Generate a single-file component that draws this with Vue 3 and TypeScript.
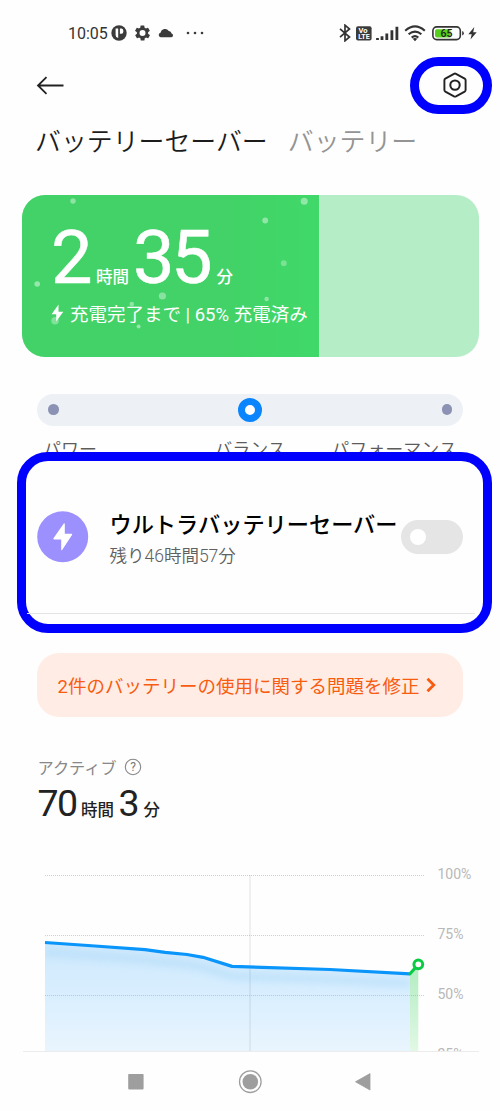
<script setup lang="ts">
interface Dot {
  x: number
  y: number
  r: number
  o: number
}

const bubbles: Dot[] = [
  { x: 51, y: 6, r: 2.7, o: 0.4 },
  { x: 15.2, y: 89, r: 2.8, o: 0.45 },
  { x: 140.4, y: 101, r: 3.6, o: 0.38 },
  { x: 109.8, y: 109, r: 2.3, o: 0.4 },
  { x: 33, y: 125.8, r: 3.8, o: 0.33 },
  { x: 116.6, y: 131.5, r: 2, o: 0.45 },
  { x: 282.2, y: 6.2, r: 3.5, o: 0.42 },
  { x: 243.2, y: 25.5, r: 2.9, o: 0.42 },
  { x: 261.8, y: 68.2, r: 2.9, o: 0.3 },
  { x: 244.6, y: 104, r: 2.2, o: 0.4 },
]

const modes: string[] = ['パワー', 'バランス', 'パフォーマンス']

const gridLines = [
  { y: 15.5, label: '100%' },
  { y: 75.5, label: '75%' },
  { y: 135.5, label: '50%' },
  { y: 195.5, label: '25%' },
]

const levelLine = '45,82.5 95,86 145,89.7 165,92.3 187,94.5 203,97.3 232,106.4 330,109.5 410,113.8'
</script>

<template>
  <div class="screen">
    <header class="status">
      <span class="clock">10:05</span>
      <svg class="s-app" width="16" height="16" viewBox="0 0 16 16">
        <circle cx="8" cy="8" r="7.7" fill="#3b3b3b" />
        <path d="M4.6 3.6H7.2V13Q4.6 12.4 4.6 10Z M8.9 3.6H10.6Q12.4 3.9 12.4 6.2Q12.4 8.8 10.4 8.8H8.9Z" fill="#fff" />
      </svg>
      <svg class="s-gear" width="15" height="16" viewBox="2 1.5 20 21">
        <path
          fill="#3b3b3b"
          d="M19.4 13c.1-.3.1-.6.1-1s0-.7-.1-1l2.1-1.6c.2-.2.2-.4.1-.6l-2-3.5c-.1-.2-.4-.3-.6-.2l-2.5 1c-.5-.4-1.1-.7-1.7-1l-.4-2.6c0-.2-.2-.4-.5-.4h-4c-.2 0-.4.2-.5.4l-.4 2.6c-.6.3-1.1.6-1.7 1l-2.5-1c-.2-.1-.5 0-.6.2l-2 3.5c-.1.2-.1.5.1.6L4.6 11c-.1.3-.1.7-.1 1s0 .7.1 1l-2.1 1.6c-.2.2-.2.4-.1.6l2 3.5c.1.2.4.3.6.2l2.5-1c.5.4 1.1.7 1.7 1l.4 2.6c0 .2.2.4.5.4h4c.2 0 .4-.2.5-.4l.4-2.6c.6-.3 1.1-.6 1.7-1l2.5 1c.2.1.5 0 .6-.2l2-3.5c.1-.2.1-.5-.1-.6zM12 16a4 4 0 1 1 0-8 4 4 0 0 1 0 8z"
        />
      </svg>
      <svg class="s-cloud" width="16" height="10" viewBox="0 0 16 10">
        <path d="M2.6 9.2A2.3 2.3 0 0 1 2.5 4.7A4.6 4.6 0 0 1 10.8 2.9A3.1 3.1 0 0 1 13.6 5.5A1.9 1.9 0 0 1 13.6 9.2Z" fill="#3b3b3b" />
      </svg>
      <svg class="s-dots" width="18" height="4" viewBox="0 0 18 4">
        <circle cx="2" cy="2" r="1.3" fill="#3b3b3b" />
        <circle cx="9" cy="2" r="1.3" fill="#3b3b3b" />
        <circle cx="16" cy="2" r="1.3" fill="#3b3b3b" />
      </svg>
      <div class="status-right">
        <svg width="12" height="18" viewBox="0 0 12 18">
          <path d="M1 4.8L10.5 13L6 16.8V1.2L10.5 5L1 13.2" fill="none" stroke="#333" stroke-width="1.7" stroke-linejoin="miter" />
        </svg>
        <svg class="s-volte" width="16" height="15" viewBox="0 0 16 15">
          <rect x="0" y="0.3" width="15.6" height="14.2" rx="2" fill="#3b3b3b" />
          <text x="2.5" y="6.9" class="volte" textLength="9" lengthAdjust="spacingAndGlyphs">Vo</text>
          <text x="2.2" y="13" class="volte" textLength="11.5" lengthAdjust="spacingAndGlyphs">LTE</text>
        </svg>
        <svg class="s-signal" width="23" height="15" viewBox="0 0 23 15">
          <path d="M1.5 14V12M6 14V10.3M10.8 14V7.6M15.9 14V4.3M20.900 14V.7" stroke="#333" stroke-width="2.8" />
        </svg>
        <svg class="s-wifi" width="22" height="17" viewBox="0 0 22 17">
          <path d="M1.2 5.7Q11 -2.9 20.8 5.7M4.6 9.3Q11 3.8 17.4 9.3M7.7 12.6Q11 9.8 14.3 12.6" fill="none" stroke="#333" stroke-width="2.1" />
          <path d="M8.7 13.8Q11 12.1 13.3 13.8L11 16.2Z" fill="#333" />
        </svg>
        <svg class="s-batt" width="33" height="15" viewBox="0 0 33 15">
          <rect x="0.9" y="0.9" width="27.4" height="12.7" rx="3.8" fill="none" stroke="#333" stroke-width="1.6" />
          <path d="M4.8 3.2H18.5V11.4H4.8Q3 11.4 3 9.6V5Q3 3.2 4.8 3.2Z" fill="#57cf1d" />
          <path d="M30.2 5Q31.8 5.5 31.8 7.2Q31.8 9 30.2 9.5Z" fill="#333" />
          <text x="8.6" y="11" class="batt" textLength="12" lengthAdjust="spacingAndGlyphs">65</text>
        </svg>
        <svg class="s-bolt" width="9" height="13" viewBox="0 0 9 13">
          <path d="M6.3 0L.3 7.3H3.7L2.5 12.6L8.7 5.2H5.2Z" fill="#333" />
        </svg>
      </div>
    </header>

    <nav class="toolbar">
      <svg width="28" height="20" viewBox="0 0 28 20">
        <path d="M27.5 10.5H2.3M10.5 2.2L2 10.5L10.5 18.8" fill="none" stroke="#222" stroke-width="1.8" />
      </svg>
      <svg class="hex" width="26" height="28" viewBox="0 0 26 28">
        <path d="M12 2.8Q13 2.3 14 2.8L22.7 7.6Q23.6 8.1 23.6 9.1V19.1Q23.6 20.1 22.7 20.6L14 25.4Q13 25.9 12 25.4L3.3 20.6Q2.4 20.1 2.4 19.1V9.1Q2.4 8.1 3.3 7.6Z" fill="none" stroke="#222" stroke-width="1.9" />
        <circle cx="13" cy="14.1" r="4.7" fill="none" stroke="#222" stroke-width="2" />
      </svg>
      <div class="ring"></div>
    </nav>

    <div class="tabs">
      <span class="tab active">バッテリーセーバー</span>
      <span class="tab">バッテリー</span>
    </div>

    <section class="hero">
      <div class="charge"></div>
      <svg class="bubbles" width="297" height="162" viewBox="0 0 297 162">
        <circle v-for="(b, i) in bubbles" :key="i" :cx="b.x" :cy="b.y" :r="b.r" fill="#fff" :opacity="b.o" />
      </svg>
      <div class="hero-time">
        <span class="big first">2</span><span class="unit u1">時間</span><span class="big second">35</span><span class="unit u2">分</span>
      </div>
      <div class="hero-note">
        <svg width="13" height="18" viewBox="0 0 13 18">
          <path d="M7.5 .5L.6 10.3H5.2V17.5L12.3 7.7H7.5Z" fill="#fff" />
        </svg>
        <span>充電完了まで | 65% 充電済み</span>
      </div>
    </section>

    <div class="slider">
      <i class="stop"></i>
      <i class="thumb"></i>
      <i class="stop"></i>
    </div>
    <div class="modes">
      <span v-for="m in modes" :key="m">{{ m }}</span>
    </div>

    <section class="ultra">
      <div class="ultra-row">
        <svg class="ultra-icon" width="52" height="52" viewBox="0 0 52 52">
          <circle cx="25.7" cy="25.7" r="25.5" fill="#9c8ffe" />
          <path d="M26.6 12.7Q27.8 11.6 27.8 13.2V22.8H34.3Q35.8 22.9 35 24L25.3 38.8Q24.2 40 24.2 38.4V28.5H17.2Q15.7 28.4 16.5 27.3Z" fill="#fff" />
        </svg>
        <div class="ultra-text">
          <div class="ultra-title">ウルトラバッテリーセーバー</div>
          <div class="ultra-sub">残り46時間57分</div>
        </div>
        <div class="toggle"><i></i></div>
      </div>
      <div class="rule"></div>
    </section>

    <section class="alert">
      <span>2件のバッテリーの使用に関する問題を修正</span>
      <svg width="10" height="16" viewBox="0 0 10 16">
        <path d="M1.5 1.7L7.8 8L1.5 14.3" fill="none" stroke="#f85c10" stroke-width="2.8" />
      </svg>
    </section>

    <div class="active-label">
      <span>アクティブ</span>
      <svg width="18" height="18" viewBox="0 0 18 18">
        <circle cx="9" cy="9" r="7.7" fill="none" stroke="#888" stroke-width="1.1" />
        <text x="9" y="13.3" text-anchor="middle" class="help">?</text>
      </svg>
    </div>
    <div class="active-time">
      <span class="num n1">70</span><span class="kan k1">時間</span><span class="num n2">3</span><span class="kan k2">分</span>
    </div>

    <svg class="chart" width="500" height="191" viewBox="0 0 500 191">
      <defs>
        <linearGradient id="blueFill" x1="0" y1="82" x2="0" y2="191" gradientUnits="userSpaceOnUse">
          <stop offset="0" stop-color="#cde8fc" />
          <stop offset="0.45" stop-color="#d8eefe" />
          <stop offset="1" stop-color="#e9f5fe" />
        </linearGradient>
        <linearGradient id="greenFill" x1="0" y1="110" x2="0" y2="191" gradientUnits="userSpaceOnUse">
          <stop offset="0" stop-color="#b4edc3" />
          <stop offset="1" stop-color="#e1f8e5" />
        </linearGradient>
        <filter id="glow" x="-10%" y="-50%" width="120%" height="250%">
          <feGaussianBlur stdDeviation="3.5" />
        </filter>
        <clipPath id="underLine">
          <polygon :points="`${levelLine} 410,191 45,191`" />
        </clipPath>
      </defs>
      <polygon :points="`${levelLine} 410,191 45,191`" fill="url(#blueFill)" />
      <g clip-path="url(#underLine)">
        <polyline :points="levelLine" transform="translate(0 10)" fill="none" stroke="#9fd3f8" stroke-width="7" opacity="0.4" filter="url(#glow)" />
      </g>
      <polygon points="410,114 418.3,106 418.3,191 410,191" fill="url(#greenFill)" />
      <g v-for="g in gridLines" :key="g.label">
        <line x1="45" x2="424" :y1="g.y" :y2="g.y" stroke="#8a949c" stroke-opacity="0.42" stroke-dasharray="1 1" />
        <text x="437.5" :y="g.y + 3.8" class="axis">{{ g.label }}</text>
      </g>
      <line x1="250" x2="250" y1="15" y2="191" stroke="#5a6a78" stroke-opacity="0.12" stroke-width="1.5" />
      <polyline :points="levelLine" fill="none" stroke="#0a95fb" stroke-width="3.2" stroke-linejoin="round" />
      <path d="M410 113.8L416 107" stroke="#0bcb45" stroke-width="3.2" stroke-linecap="round" />
      <circle cx="418.3" cy="104.3" r="4.4" fill="#fff" stroke="#0bcb45" stroke-width="3" />
    </svg>

    <footer class="navbar">
      <svg width="16" height="16" viewBox="0 0 16 16"><rect x="0.2" y="0" width="15.4" height="15.4" rx="0.8" fill="#9e9e9e" /></svg>
      <svg width="24" height="24" viewBox="0 0 24 24">
        <circle cx="12.3" cy="11.7" r="10.8" fill="none" stroke="#9e9e9e" stroke-width="1.3" />
        <circle cx="12.3" cy="11.7" r="7.8" fill="#9e9e9e" />
      </svg>
      <svg width="16" height="18" viewBox="0 0 16 18"><path d="M.5 8.8L15 .6V17Z" fill="#9e9e9e" stroke="#9e9e9e" stroke-linejoin="round" stroke-width="0.8" /></svg>
    </footer>
  </div>
</template>

<style>
body {
  margin: 0;
  background: #fefefe;
}
</style>

<style scoped>
.screen {
  width: 500px;
  height: 1111px;
  overflow: hidden;
  display: flex;
  flex-direction: column;
  background: #fefefe;
  font-family: Roboto, 'Noto Sans CJK JP', sans-serif;
  color: #222;
}
.screen > * {
  flex-shrink: 0;
}
svg {
  display: block;
  flex-shrink: 0;
}
span,
.ultra-title,
.ultra-sub {
  white-space: nowrap;
}
.status {
  box-sizing: border-box;
  height: 56px;
  padding: 10px 23px 0 68px;
  display: flex;
  align-items: center;
}
.clock {
  width: 43px;
  padding-top: 1px;
  font-size: 16px;
  line-height: 20px;
  color: #333;
}
.s-gear {
  margin-left: 8px;
}
.s-cloud {
  margin-left: 8px;
}
.s-dots {
  margin-left: 12px;
}
.status-right {
  margin-left: auto;
  display: flex;
  align-items: center;
}
.s-volte {
  margin-left: 5px;
}
.s-signal {
  margin-left: 4px;
}
.s-wifi {
  margin-left: 5px;
}
.s-batt {
  margin-left: 6px;
}
.s-bolt {
  margin-left: 3px;
}
.volte {
  font: 700 6.5px Roboto, sans-serif;
  fill: #fff;
}
.batt {
  font: 500 10px Roboto, sans-serif;
  fill: #222;
}
.toolbar {
  position: relative;
  height: 58px;
  padding: 0 32px 0 36px;
  display: flex;
  align-items: center;
  justify-content: space-between;
}
.ring {
  position: absolute;
  left: 410px;
  top: 0.5px;
  box-sizing: border-box;
  width: 81.5px;
  height: 57px;
  border: 9.5px solid #00f;
  border-radius: 28.5px;
}
.tabs {
  height: 80.5px;
  padding-left: 35px;
  display: flex;
  align-items: flex-start;
  gap: 20px;
}
.tab {
  font-size: 25.9px;
  line-height: 56px;
  font-weight: 350;
  color: #949494;
}
.tab.active {
  color: #1c1c1c;
}
.hero {
  position: relative;
  width: 457.5px;
  height: 162px;
  margin-left: 21.5px;
  border-radius: 23px;
  overflow: hidden;
  background: #b4edc6;
}
.charge {
  position: absolute;
  inset: 0 auto 0 0;
  width: 297.5px;
  background: linear-gradient(90deg, #42d267 70%, #40d969);
}
.bubbles {
  position: absolute;
  left: 0;
  top: 0;
}
.hero-time {
  position: relative;
  height: 105px;
  padding-left: 29.5px;
  display: flex;
  align-items: baseline;
  color: #fff;
}
.big {
  font-size: 74px;
  line-height: 126px;
  letter-spacing: -3.5px;
  -webkit-text-stroke: 0.5px #fff;
}
.first {
  width: 45px;
}
.second {
  width: 83.5px;
}
.unit {
  font-size: 16.5px;
  font-weight: 500;
}
.u1 {
  width: 37px;
}
.hero-note {
  position: relative;
  height: 27px;
  padding-left: 29px;
  display: flex;
  align-items: center;
  gap: 6.5px;
  color: #fff;
  font-size: 18.5px;
}
.slider {
  box-sizing: border-box;
  width: 426px;
  height: 32px;
  margin: 37px 0 0 37px;
  padding: 0 11px;
  border-radius: 16px;
  background: #edf1f6;
  display: flex;
  align-items: center;
  justify-content: space-between;
}
.stop {
  width: 10.5px;
  height: 10.5px;
  border-radius: 50%;
  background: #8b92b3;
}
.thumb {
  box-sizing: border-box;
  width: 24px;
  height: 24px;
  border: 7px solid #0b85fd;
  border-radius: 50%;
  background: #fff;
}
.modes {
  height: 26.5px;
  padding: 0 43px;
  display: grid;
  grid-template-columns: 1fr auto 1fr;
  font-size: 18px;
  line-height: 48px;
  font-weight: 350;
  color: #5c5c5c;
}
.modes span:last-child {
  text-align: right;
}
.ultra {
  position: relative;
  box-sizing: border-box;
  width: 474.5px;
  height: 181px;
  margin-left: 17px;
  border: 9.5px solid #00f;
  border-radius: 31px;
  background: #fefefe;
}
.ultra-row {
  height: 151.5px;
  padding: 0 19px 0 10.5px;
  display: flex;
  align-items: center;
}
.ultra-text {
  width: 291px;
  margin-left: 21px;
  padding-top: 6px;
}
.ultra-title {
  font-size: 22.2px;
  line-height: 32px;
  font-weight: 500;
  color: #000;
}
.ultra-sub {
  font-size: 17.5px;
  line-height: 30px;
  font-weight: 350;
  color: #606060;
}
.toggle {
  box-sizing: border-box;
  width: 62px;
  height: 34px;
  padding: 9px;
  border-radius: 17px;
  background: #e5e5e5;
}
.toggle i {
  display: block;
  width: 16px;
  height: 16px;
  border-radius: 50%;
  background: #fff;
}
.rule {
  height: 1px;
  margin: 0 8px 0 1px;
  background: #e4e4e4;
}
.alert {
  box-sizing: border-box;
  width: 426px;
  height: 64.5px;
  margin: 19.5px 0 0 37px;
  padding-left: 20.5px;
  border-radius: 22px;
  background: #ffece5;
  color: #f85c10;
  display: flex;
  align-items: center;
  gap: 7px;
  font-size: 18.5px;
}
.active-label {
  height: 24px;
  margin-top: 37.5px;
  padding-left: 37.5px;
  display: flex;
  align-items: center;
  gap: 7.5px;
  font-size: 16.2px;
  color: #888;
}
.help {
  font: 400 12px Roboto, sans-serif;
  fill: #777;
}
.active-time {
  height: 81.5px;
  padding-left: 37.5px;
  display: flex;
  align-items: baseline;
}
.num {
  font-size: 37.5px;
  line-height: 49px;
  letter-spacing: -1.5px;
}
.n1 {
  width: 43.5px;
}
.n2 {
  width: 25px;
}
.kan {
  font-size: 16.5px;
  font-weight: 500;
}
.k1 {
  width: 37.5px;
}
.chart {
  height: 191px;
}
.axis {
  font: 400 14px Roboto, sans-serif;
  fill: #b8b8b8;
}
.navbar {
  box-sizing: border-box;
  width: 456px;
  height: 60px;
  margin-left: 23px;
  padding: 0 108px 0 105px;
  border-top: 1px solid #ececec;
  display: flex;
  align-items: center;
  justify-content: space-between;
}
</style>
